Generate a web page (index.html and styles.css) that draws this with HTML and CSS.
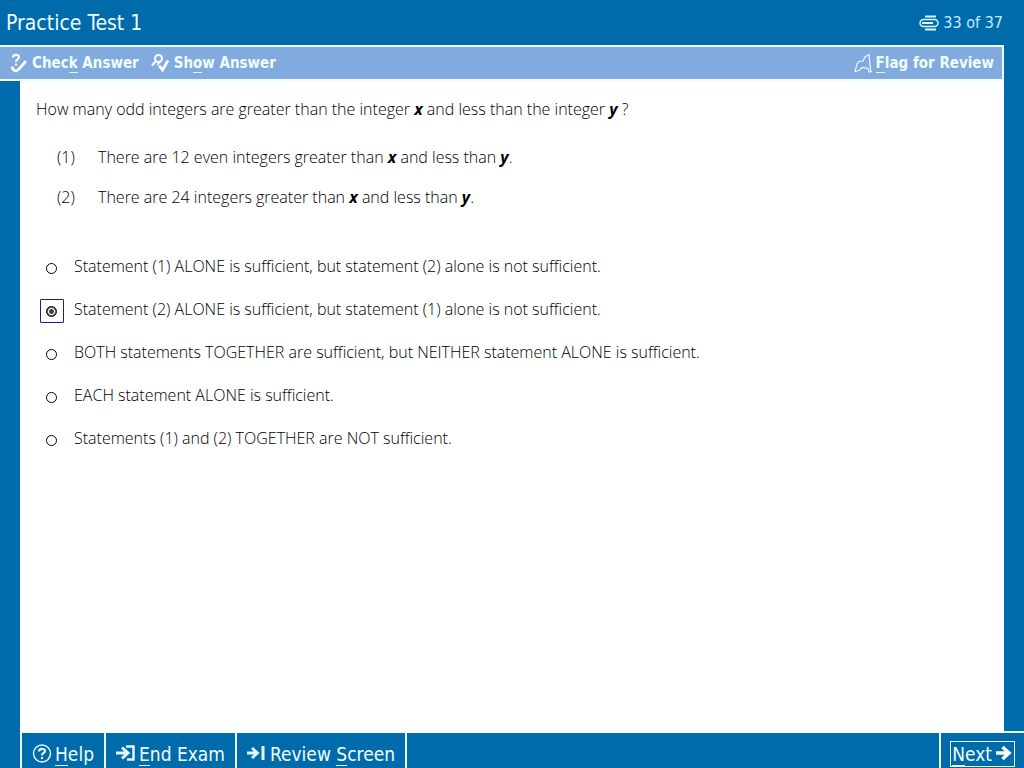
FILE: index.html
```html
<!DOCTYPE html>
<html lang="en">
<head>
<meta charset="utf-8">
<title>Practice Test 1</title>
<link rel="stylesheet" href="styles.css">
</head>
<body>
<header class="header">
  <h1 class="title">Practice Test 1</h1>
  <div class="progress">
    <svg width="20" height="16" viewBox="0 0 20 16" fill="none" stroke="#d8f6ff">
      <path d="M6 1.500h11M6 14.500h11" stroke-width="2"/>
      <rect x="1" y="4.500" width="18" height="7" rx="3.500" stroke-width="1.500"/>
      <path d="M3 8h11" stroke-width="2"/>
    </svg>
    <span>33 of 37</span>
  </div>
</header>
<div class="toolbar">
  <button type="button" class="tool">
    <svg width="16" height="20" viewBox="0 0 16 20" fill="none" stroke="#fff">
      <path d="M2 4.500C2 1 8 1 8 4C8 6 5 6.500 5 9M5 10.500v2" stroke-width="2.200"/>
      <path d="M1 13.500C2 17.500 4 18.500 6 17.500C9 15.500 12 11 15 8" stroke-width="2.800"/>
    </svg>
    <span>Chec<u>k</u> Answer</span>
  </button>
  <button type="button" class="tool">
    <svg width="18" height="20" viewBox="0 0 18 20" fill="none" stroke="#fff">
      <circle cx="7.500" cy="5.500" r="3.500" stroke-width="2"/>
      <path d="M5 8L1 12.500" stroke-width="2"/>
      <path d="M8 12.500L11.500 17L17 7.500" stroke-width="2.800"/>
      <path d="M6 12L9 9" stroke-width="1.500"/>
    </svg>
    <span>Sh<u>o</u>w Answer</span>
  </button>
  <button type="button" class="tool flag">
    <svg width="18" height="20" viewBox="0 0 18 20" fill="none" stroke="#e4f8ff" stroke-width="1.200">
      <path d="M1 18.500L3 11L5 8.500L9 8L11 4L15 1.500L16.500 17L17.500 18.500L15 19L14 15.500L8 14.500L5 17.500Z"/>
    </svg>
    <span><u>F</u>lag for Review</span>
  </button>
</div>
<main class="content">
  <p class="question">How many odd integers are greater than the integer <b>x</b> and less than the integer <b>y</b> ?</p>
  <ol class="statements">
    <li><span>(1)</span><span>There are 12 even integers greater than <b>x</b> and less than <b>y</b>.</span></li>
    <li><span>(2)</span><span>There are 24 integers greater than <b>x</b> and less than <b>y</b>.</span></li>
  </ol>
  <form class="choices">
    <label class="choice"><span class="focus"><input type="radio" name="answer"></span><span>Statement (1) ALONE is sufficient, but statement (2) alone is not sufficient.</span></label>
    <label class="choice"><span class="focus"><input type="radio" name="answer" checked></span><span>Statement (2) ALONE is sufficient, but statement (1) alone is not sufficient.</span></label>
    <label class="choice"><span class="focus"><input type="radio" name="answer"></span><span>BOTH statements TOGETHER are sufficient, but NEITHER statement ALONE is sufficient.</span></label>
    <label class="choice"><span class="focus"><input type="radio" name="answer"></span><span>EACH statement ALONE is sufficient.</span></label>
    <label class="choice"><span class="focus"><input type="radio" name="answer"></span><span>Statements (1) and (2) TOGETHER are NOT sufficient.</span></label>
  </form>
</main>
<footer class="footer">
  <button type="button" class="nav">
    <svg width="20" height="20" viewBox="0 0 20 20" fill="none" stroke="#e4f8ff">
      <circle cx="10" cy="9.500" r="8.500" stroke-width="1.500"/>
      <path d="M7 7.500C7 4 13 4 13 7C13 9 10 9 10 11.500M10 13v2" stroke-width="2.200"/>
    </svg>
    <span><u>H</u>elp</span>
  </button>
  <button type="button" class="nav">
    <svg width="20" height="20" viewBox="0 0 20 20" fill="none" stroke="#e4f8ff">
      <path d="M0 9h12M6 3.500l6 5.500L6 14.500" stroke-width="3"/>
      <path d="M10 2.500h7.500v13H11" stroke-width="2.500"/>
    </svg>
    <span><u>E</u>nd Exam</span>
  </button>
  <button type="button" class="nav">
    <svg width="20" height="20" viewBox="0 0 20 20" fill="none" stroke="#e4f8ff">
      <path d="M0 9h11M5 4l5.500 5L5 14" stroke-width="2.800"/>
      <path d="M16 2v14" stroke-width="3"/>
    </svg>
    <span>Review <u>S</u>creen</span>
  </button>
  <button type="button" class="nav next">
    <span class="ring"><span><u>N</u>ext</span>
    <svg width="16" height="20" viewBox="0 0 16 20" fill="none" stroke="#fff" stroke-width="3.500">
      <path d="M0 9h13M6.500 3l6.500 6L6.500 15"/>
    </svg></span>
  </button>
</footer>
</body>
</html>
```
FILE: styles.css
```css
* { box-sizing: border-box; }
body {
  margin: 0;
  min-height: 100vh;
  display: flex;
  flex-direction: column;
  background: #006bab;
  color: #000;
  font: 16px/20px "DejaVu Sans Condensed", "DejaVu Sans", sans-serif;
  font-variant-ligatures: none;
}
button {
  margin: 0;
  padding: 0;
  border: 0;
  background: none;
  color: #f0fdff;
  font: inherit;
  display: flex;
  align-items: center;
}
svg { flex: none; }
u {
  text-decoration: none;
  border-bottom: 1px solid #e4f8ff;
}
.header {
  height: 45px;
  padding: 0 21px 0 6px;
  display: flex;
  align-items: center;
  justify-content: space-between;
  color: #f0fdff;
}
.title {
  margin: 0;
  font-size: 21px;
  font-weight: normal;
}
.progress {
  display: flex;
  align-items: center;
  gap: 4px;
  color: #c4ecff;
}
.toolbar {
  height: 36px;
  margin-right: 20px;
  padding: 0 8px 0 11px;
  display: flex;
  align-items: center;
  gap: 12px;
  background: #81abdf;
  border: 2px solid #f0fdff;
  border-left: 0;
}
.tool {
  gap: 5px;
  font-size: 15px;
  font-weight: bold;
}
.flag {
  margin-left: auto;
  gap: 4px;
}
.content {
  flex: 1;
  margin: 0 20px;
  padding: 18px 16px;
  background: #fff;
  font-family: "Open Sans", sans-serif;
  font-weight: 300;
}
.question { margin: 0; }
b {
  font-style: italic;
  font-weight: 700;
}
.statements {
  list-style: none;
  margin: 28px 0 0;
  padding: 0 0 0 21px;
  display: grid;
  gap: 20px;
}
.statements li {
  display: grid;
  grid-template-columns: 41px 1fr;
}
.choices {
  margin-top: 49px;
  padding-left: 4px;
  display: grid;
  gap: 19px;
}
.choice {
  display: flex;
  align-items: flex-start;
  gap: 10px;
  height: 24px;
}
.focus {
  width: 24px;
  height: 24px;
  padding-right: 1px;
  display: grid;
  place-items: center;
  border: 1px solid transparent;
  border-radius: 1px;
}
.focus:has(input:checked) { border-color: #1a1aa0; }
.choice input {
  appearance: none;
  width: 11px;
  height: 11px;
  margin: 0;
  border: 1px solid #000;
  border-radius: 50%;
  background: #fff;
}
.choice input:checked { background: radial-gradient(circle, #444 2px, #fff 3px, #fff 3px, #666 4px); }
.footer {
  height: 37px;
  margin-left: 20px;
  display: flex;
  border-top: 2px solid #f0fdff;
  border-left: 2px solid #f0fdff;
  font-size: 19px;
}
.nav {
  padding: 6px 10px 0;
  gap: 3px;
  border-right: 2px solid #f0fdff;
}
.next {
  margin-left: auto;
  padding: 6px 9px 0;
  border-right: 0;
  border-left: 2px solid #f0fdff;
}
.ring {
  height: 26px;
  padding: 0 2px 0 1px;
  display: flex;
  align-items: center;
  gap: 4px;
  border: 1px solid #f0fdff;
}
```
